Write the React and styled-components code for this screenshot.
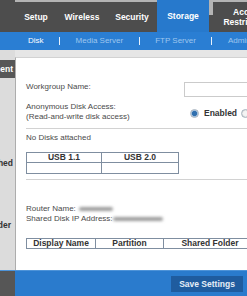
import React from "react";
import styled, { createGlobalStyle } from "styled-components";

const GlobalStyle = createGlobalStyle`
  html, body { margin: 0; padding: 0; background: #ffffff; overflow: hidden; }
  body { font-family: "Liberation Sans", Arial, sans-serif; }
`;

const Page = styled.div`
  width: 247px;
  height: 296px;
  overflow: hidden;
  display: flex;
  flex-direction: column;
`;

const Header = styled.header`
  height: 32px;
  flex: none;
  display: flex;
  background: #4d4d4d;
`;

const HeaderLead = styled.div`
  width: 15px;
  flex: none;
`;

const Tab = styled.div`
  flex: none;
  width: ${(p) => p.$w}px;
  height: 32px;
  box-sizing: border-box;
  display: flex;
  flex-direction: column;
  align-items: center;
  justify-content: center;
  border-top: ${(p) => (p.$active ? "none" : "2px solid #b4b4b4")};
  background: ${(p) => (p.$active ? "#2779cc" : "transparent")};
  color: #ffffff;
  font-size: 8.5px;
  font-weight: bold;
  line-height: 10px;
  white-space: nowrap;
`;

const TabGap = styled.div`
  flex: none;
  width: 4px;
  height: 32px;
  background: linear-gradient(#b4b4b4 0 15px, #4d4d4d 15px);
`;

const SubNav = styled.nav`
  height: 18px;
  flex: none;
  display: flex;
  align-items: center;
  gap: 15.5px;
  padding-left: 28px;
  background: #2a7ed3;
  white-space: nowrap;
`;

const SubItem = styled.span`
  font-size: 8px;
  line-height: 10px;
  color: ${(p) => (p.$active ? "#ffffff" : "#9fc6ee")};
`;

const SubSep = styled.span`
  flex: none;
  width: 1px;
  height: 8px;
  background: #e8f1fb;
`;

const Body = styled.div`
  height: 220px;
  flex: none;
  display: flex;
  background: #e6e6e6;
  overflow: hidden;
`;

const Sidebar = styled.aside`
  width: 15px;
  flex: none;
  display: flex;
  flex-direction: column;
  padding-top: 10px;
  background: #dcdcdc;
`;

const SideHead = styled.div`
  height: 18px;
  display: flex;
  align-items: center;
  justify-content: flex-end;
  padding-right: 2px;
  overflow: hidden;
  background: #575757;
  color: #ffffff;
  font-size: 8.5px;
  font-weight: bold;
  white-space: nowrap;
`;

const SideItem = styled.div`
  margin-top: ${(p) => p.$mt}px;
  height: 10px;
  line-height: 10px;
  display: flex;
  justify-content: flex-end;
  padding-right: ${(p) => p.$pr}px;
  overflow: hidden;
  color: #333333;
  font-size: 8.5px;
  font-weight: bold;
  white-space: nowrap;
`;

const Panel = styled.main`
  flex: none;
  width: 260px;
  margin-top: 7px;
  box-sizing: border-box;
  padding: 24px 0 0 10px;
  background: #ffffff;
  border-left: 1px solid #adadad;
  border-top: 1px solid #d2d2d2;
  color: #4a4a4a;
  font-size: 8px;
  line-height: 10px;
`;

const FieldRow = styled.div`
  display: grid;
  grid-template-columns: 158px 1fr;
  margin-top: ${(p) => p.$mt || 0}px;
`;

const Label = styled.div`
  white-space: nowrap;
`;

const TextInput = styled.div`
  width: 80px;
  height: 15px;
  box-sizing: border-box;
  border: 1px solid #cbcbcb;
  background: #ffffff;
`;

const RadioGroup = styled.div`
  display: flex;
  align-items: center;
  padding: 2px 0 0 6px;
  white-space: nowrap;
`;

const Radio = styled.span`
  flex: none;
  width: 9px;
  height: 9px;
  box-sizing: border-box;
  border-radius: 50%;
  border: 1px solid #a7b3bf;
  background: ${(p) =>
    p.$checked
      ? "radial-gradient(circle, #2f6fae 0 2.2px, #8fb4d8 2.8px, #d9e4ee 4px)"
      : "radial-gradient(circle, #f4f4f4 0 2px, #d6d6d6 4px)"};
`;

const RadioText = styled.span`
  margin: 0 4px 0 5px;
  font-size: 8.5px;
  font-weight: bold;
  color: #333333;
`;

const Divider = styled.div`
  height: 1px;
  background: #d2d2d2;
  margin-top: ${(p) => p.$mt}px;
`;

const Note = styled.div`
  margin-top: ${(p) => p.$mt}px;
  white-space: nowrap;
`;

const Grid = styled.table`
  margin-top: ${(p) => p.$mt}px;
  border-collapse: collapse;
  table-layout: fixed;
  width: ${(p) => p.$w}px;
`;

const Th = styled.th`
  width: ${(p) => p.$w}px;
  height: 9px;
  padding: 0;
  border: 1px solid #7f8ea0;
  font-size: 8.5px;
  line-height: 9px;
  font-weight: bold;
  color: #333333;
  text-align: center;
  white-space: nowrap;
`;

const Td = styled.td`
  height: 10px;
  padding: 0;
  border: 1px solid #7f8ea0;
`;

const Blur = styled.span`
  display: inline-block;
  width: ${(p) => p.$w}px;
  height: 4px;
  margin-left: ${(p) => p.$ml}px;
  vertical-align: middle;
  border-radius: 2px;
  background: #9c9c9c;
  filter: blur(1.4px);
`;

const Footer = styled.footer`
  height: 26px;
  flex: none;
  display: flex;
  align-items: center;
  background: #2a7bcd;
  border-top: 1px solid #4d93d8;
  box-sizing: border-box;
`;

const FooterLead = styled.div`
  width: 15px;
  align-self: stretch;
  background: #565656;
`;

const SaveButton = styled.button`
  margin: 0 4px 0 auto;
  width: 72px;
  height: 16px;
  padding: 0;
  border: none;
  background: #1f5c9f;
  color: #e6eef7;
  font-family: "Liberation Sans", Arial, sans-serif;
  font-size: 8.5px;
  font-weight: bold;
`;

export default function App() {
  return (
    <>
      <GlobalStyle />
      <Page>
        <Header>
          <HeaderLead />
          <Tab $w={42}>Setup</Tab>
          <Tab $w={50}>Wireless</Tab>
          <Tab $w={50}>Security</Tab>
          <Tab $w={52} $active>Storage</Tab>
          <TabGap />
          <Tab $w={70}>
            <span>Access</span>
            <span>Restrictions</span>
          </Tab>
        </Header>
        <SubNav>
          <SubItem $active>Disk</SubItem>
          <SubSep />
          <SubItem>Media Server</SubItem>
          <SubSep />
          <SubItem>FTP Server</SubItem>
          <SubSep />
          <SubItem>Administration</SubItem>
        </SubNav>
        <Body>
          <Sidebar>
            <SideHead>Disk Management</SideHead>
            <SideItem $mt={80} $pr={2}>Disks Attached</SideItem>
            <SideItem $mt={52} $pr={4}>Shared Folder</SideItem>
          </Sidebar>
          <Panel>
            <FieldRow>
              <Label>Workgroup Name:</Label>
              <TextInput />
            </FieldRow>
            <FieldRow $mt={5}>
              <Label>
                Anonymous Disk Access:
                <br />
                (Read-and-write disk access)
              </Label>
              <RadioGroup>
                <Radio $checked />
                <RadioText>Enabled</RadioText>
                <Radio />
              </RadioGroup>
            </FieldRow>
            <Divider $mt={6} />
            <Note $mt={4}>No Disks attached</Note>
            <Grid $mt={9} $w={150}>
              <thead>
                <tr>
                  <Th $w={74}>USB 1.1</Th>
                  <Th $w={76}>USB 2.0</Th>
                </tr>
              </thead>
              <tbody>
                <tr>
                  <Td />
                  <Td />
                </tr>
              </tbody>
            </Grid>
            <Divider $mt={5} />
            <Note $mt={24}>
              Router Name:<Blur $w={34} $ml={3} />
              <br />
              Shared Disk IP Address:<Blur $w={50} $ml={0} />
            </Note>
            <Grid $mt={14} $w={227}>
              <thead>
                <tr>
                  <Th $w={68}>Display Name</Th>
                  <Th $w={67}>Partition</Th>
                  <Th $w={92}>Shared Folder</Th>
                </tr>
              </thead>
            </Grid>
          </Panel>
        </Body>
        <Footer>
          <FooterLead />
          <SaveButton>Save Settings</SaveButton>
        </Footer>
      </Page>
    </>
  );
}
